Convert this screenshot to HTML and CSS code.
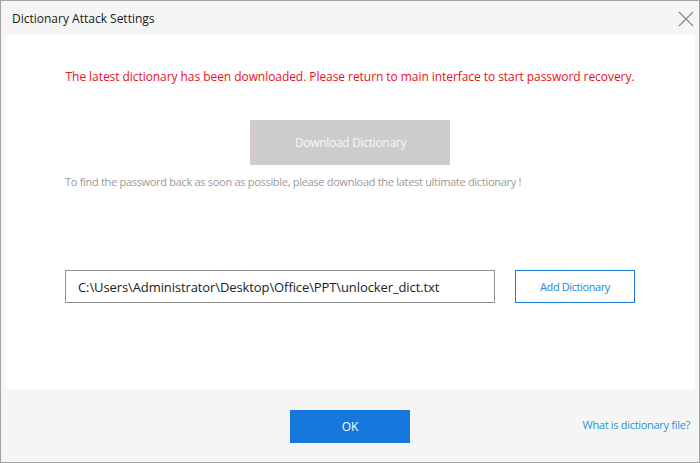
FILE: index.html
```html
<!DOCTYPE html>
<html>
<head>
<meta charset="utf-8">
<link rel="stylesheet" href="styles.css">
</head>
<body>
<div class="dialog">
  <div class="titlebar">
    <span class="title">Dictionary Attack Settings</span>
    <svg class="close" width="16" height="16" viewBox="0 0 16 16"><path d="M1 1 L15 15 M15 1 L1 15" stroke="#8a8a8a" stroke-width="1.2" fill="none"/></svg>
  </div>
  <div class="content">
    <p class="notice">The latest dictionary has been downloaded. Please return to main interface to start password recovery.</p>
    <div class="download-row"><button class="btn-download">Download Dictionary</button></div>
    <p class="hint">To find the password back as soon as possible, please download the latest ultimate dictionary !</p>
    <div class="path-row">
      <div class="path-input">C:\Users\Administrator\Desktop\Office\PPT\unlocker_dict.txt</div>
      <button class="btn-add">Add Dictionary</button>
    </div>
  </div>
  <div class="footer">
    <button class="btn-ok">OK</button>
    <a class="help-link">What is dictionary file?</a>
  </div>
</div>
</body>
</html>
```
FILE: styles.css
```css
* { box-sizing: border-box; }
html, body { margin: 0; padding: 0; }
body { width: 700px; height: 463px; font-family: "Open Sans", "Noto Sans", sans-serif; font-size: 12px; }
.dialog {
  width: 700px; height: 463px;
  border: 1px solid #a3a3a3;
  background: #f5f5f5;
  display: flex; flex-direction: column;
}
.titlebar {
  height: 34px; flex: none;
  display: flex; align-items: center; justify-content: space-between;
  padding: 0 5px 0 11px;
  color: #1a1a1a; font-size: 12px;
}
.close { margin-top: 1px; }
.content {
  flex: none; height: 354px;
  margin: 0 4px;
  background: #fff;
  padding: 34px 0 0 60px;
}
.notice {
  margin: 0 0 0 -60px; text-align: center;
  color: #e8101c; line-height: 16px; font-size: 12px;
  letter-spacing: -0.06px;
}
.download-row { display: flex; justify-content: center; margin: 35px 0 0 -60px; }
.btn-download {
  width: 200px; height: 45px; border: none; border-left: 1px solid #e6c9c3;
  background: #cccccc; color: #f7f7f7;
  font-family: inherit; font-size: 12px; letter-spacing: -0.3px;
}
.hint { margin: 9px 0 0 0; color: #999; line-height: 16px; font-size: 11px; letter-spacing: -0.3px; }
.path-row { display: flex; gap: 20px; margin-top: 80px; }
.path-input {
  width: 430px; height: 33px;
  border: 1px solid #8f8f8f;
  padding: 0 12px; display: flex; align-items: center;
  color: #222; font-size: 13px; letter-spacing: -0.1px;
}
.btn-add {
  width: 120px; height: 33px;
  border: 1px solid #1b78d6; background: #fff;
  color: #2388d6; font-family: inherit; font-size: 11px; letter-spacing: -0.4px;
}
.footer {
  flex: 1; position: relative;
  display: flex; justify-content: center;
  padding-top: 21px;
}
.btn-ok {
  width: 120px; height: 33px; border: none;
  background: #1677dd; color: #fff;
  font-family: inherit; font-size: 12px;
}
.help-link {
  position: absolute; right: 9px; top: 28px;
  color: #2796d4; font-size: 11px; letter-spacing: -0.3px;
}
```
